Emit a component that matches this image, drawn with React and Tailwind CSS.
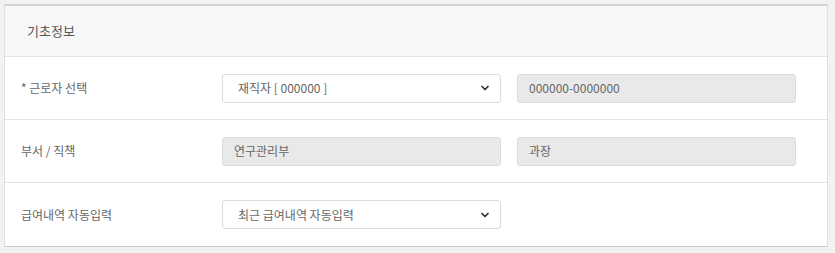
import { ChevronDown } from "lucide-react";

const font = {
  fontFamily: '"Noto Sans CJK KR", "Noto Sans", sans-serif',
};

function SelectBox({ value }) {
  return (
    <div className="flex h-[29px] w-[279px] items-center justify-between rounded-[3px] border border-[#dcdcdc] bg-white pl-[15px] pr-[9px] text-[12px] text-[#666]">
      <span>{value}</span>
      <ChevronDown size={12} strokeWidth={3.5} className="text-[#333]" />
    </div>
  );
}

function ReadOnly({ value }) {
  return (
    <div className="flex h-[29px] w-[279px] items-center rounded-[3px] border border-[#dcdcdc] bg-[#e9e9e9] pl-[11px] text-[12px] text-[#666]">
      {value}
    </div>
  );
}

function Row({ label, children, last }) {
  return (
    <div
      className={
        "flex h-[63px] items-center " + (last ? "" : "border-b border-[#e4e4e4]")
      }
    >
      <div className="w-[217px] pl-[16px] text-[12px] text-[#666]">{label}</div>
      <div className="flex gap-[16px]">{children}</div>
    </div>
  );
}

export default function App() {
  return (
    <div className="h-[253px] w-[835px] bg-[#f2f2f2] pl-[4px] pt-[4px]" style={font}>
      <div className="w-[824px] border-t-2 border-t-[#d3d3d3] border-x border-x-[#e0e0e0] border-b border-b-[#c8c8c8] bg-white">
        <div className="flex h-[51px] items-center border-b border-[#e4e4e4] bg-[#f7f7f7] pl-[22px] text-[13px] text-[#555]">
          기초정보
        </div>
        <Row label="* 근로자 선택">
          <SelectBox value="재직자 [ 000000 ]" />
          <ReadOnly value="000000-0000000" />
        </Row>
        <Row label="부서 / 직책">
          <ReadOnly value="연구관리부" />
          <ReadOnly value="과장" />
        </Row>
        <Row label="급여내역 자동입력" last>
          <SelectBox value="최근 급여내역 자동입력" />
        </Row>
      </div>
    </div>
  );
}
